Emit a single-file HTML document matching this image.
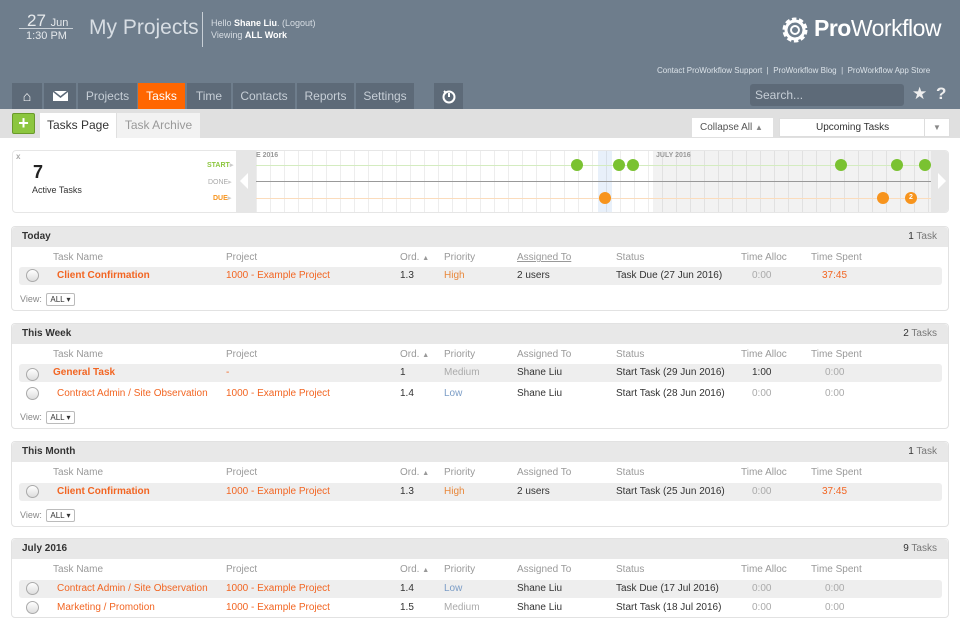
<!DOCTYPE html>
<html><head><meta charset="utf-8"><style>
*{box-sizing:border-box;margin:0;padding:0}
body{width:960px;height:607px;overflow:hidden;background:#fff;font-family:"Liberation Sans",sans-serif;font-size:10px;color:#333;position:relative}
.a{position:absolute}
#hdr{left:0;top:0;width:960px;height:109px;background:#6e7d8c}
.tab{position:absolute;top:83px;height:26px;background:#5d6a78;color:#c6ced6;font-size:12px;line-height:26px;text-align:center}
#strip{left:0;top:109px;width:960px;height:29px;background:#e0e0e0}
.sec{position:absolute;left:11px;width:938px;border:1px solid #e2e2e2;border-radius:4px;background:#fff}
.sh{height:20px;background:#e8e8e8;font-weight:bold;font-size:10px;line-height:20px;padding-left:10px;color:#333;border-radius:4px 4px 0 0}
.sh span{position:absolute;right:11px;font-weight:normal;color:#777}
.sh span b{color:#333;font-weight:normal}
.ch,.row{position:absolute;left:0;width:938px;height:18px;line-height:18px}
.ch div{position:absolute;color:#999}
.row{left:7px;width:923px;background:#eee;border-radius:3px}
.row div{position:absolute}
.rad{width:13px;height:13px;border:1px solid #aaa;border-radius:50%;top:2px;left:7px;background:linear-gradient(#fff,#ddd)}
.or{color:#f26522}
.view{position:absolute;left:8px;color:#888;font-size:9px}
.view span{display:inline-block;border:1px solid #bbb;border-radius:2px;padding:0 3px;color:#333;font-size:8px;line-height:11px;margin-left:2px}
.dot{position:absolute;width:12px;height:12px;border-radius:50%}
</style></head><body>
<div id="hdr" class="a"></div>
<div class="a" style="left:27px;top:11px;font-size:17px;color:#e6e9ec">27 <span style="font-size:11px">Jun</span></div>
<div class="a" style="left:19px;top:28px;width:54px;border-top:1px solid #c8cfd6"></div>
<div class="a" style="left:26px;top:30px;font-size:11px;color:#e6e9ec">1:30 PM</div>
<div class="a" style="left:89px;top:16px;font-size:21px;color:#d7dde3">My Projects</div>
<div class="a" style="left:202px;top:12px;height:35px;border-left:1px solid #c8cfd6"></div>
<div class="a" style="left:211px;top:17px;font-size:9px;color:#d7dde3;line-height:12px">Hello <b style="color:#fff">Shane Liu</b>. (Logout)<br>Viewing <b style="color:#fff">ALL Work</b></div>
<svg class="a" style="left:781px;top:15px" width="28" height="30" viewBox="0 0 28 30"><circle cx="14" cy="15" r="10" fill="none" stroke="#fff" stroke-width="5" stroke-dasharray="4 2.3"/><circle cx="14" cy="15" r="9" fill="none" stroke="#fff" stroke-width="3"/><circle cx="14" cy="15" r="4" fill="none" stroke="#fff" stroke-width="2"/></svg>
<div class="a" style="left:814px;top:15px;font-size:23px;color:#fff;letter-spacing:-0.5px"><b>Pro</b>Workflow</div>
<div class="a" style="left:657px;top:66px;font-size:8px;color:#dbe2e8;word-spacing:0">Contact ProWorkflow Support &nbsp;|&nbsp; ProWorkflow Blog &nbsp;|&nbsp; ProWorkflow App Store</div>
<div class="a" style="left:750px;top:84px;width:154px;height:22px;background:#5d6a78;border-radius:3px;color:#c6ced6;font-size:12px;line-height:22px;padding-left:5px">Search...</div>
<div class="a" style="left:912px;top:84px;color:#eee;font-size:17px">★</div>
<div class="a" style="left:936px;top:84px;color:#eee;font-size:17px;font-weight:bold">?</div>
<div class="tab" style="left:12px;width:30px;color:#fff;font-size:14px">⌂</div>
<div class="tab" style="left:44px;width:32px"><svg width="15" height="10" style="margin-top:8px"><rect width="15" height="10" fill="#fff"/><path d="M0 0 L7.5 6 L15 0" stroke="#5d6a78" fill="none" stroke-width="1.5"/></svg></div>
<div class="tab" style="left:78px;width:59px">Projects</div>
<div class="tab" style="left:138px;width:47px;background:#ff6600;color:#fff">Tasks</div>
<div class="tab" style="left:187px;width:44px">Time</div>
<div class="tab" style="left:233px;width:62px">Contacts</div>
<div class="tab" style="left:297px;width:57px">Reports</div>
<div class="tab" style="left:356px;width:58px">Settings</div>
<div class="tab" style="left:434px;width:29px"><svg width="16" height="16" style="margin-top:5px"><circle cx="8" cy="9" r="5.5" fill="none" stroke="#fff" stroke-width="2"/><path d="M8 9V5M3 3l2 2" stroke="#fff" stroke-width="2"/></svg></div>
<div id="strip" class="a"></div>
<div class="a" style="left:12px;top:113px;width:23px;height:21px;background:#8cc63f;border:1px solid #6a9a2a;border-radius:2px;color:#fff;font-size:18px;font-weight:bold;text-align:center;line-height:19px">+</div>
<div class="a" style="left:40px;top:113px;width:76px;height:25px;background:#fff;font-size:12px;line-height:25px;text-align:center;color:#333">Tasks Page</div>
<div class="a" style="left:117px;top:113px;width:83px;height:25px;background:#f2f2f2;font-size:12px;line-height:25px;text-align:center;color:#999">Task Archive</div>
<div class="a" style="left:692px;top:118px;width:81px;height:19px;background:#fff;font-size:10px;line-height:19px;padding-left:8px;color:#555">Collapse All <span style="color:#888;font-size:8px">▲</span></div>
<div class="a" style="left:779px;top:118px;width:171px;height:19px;background:#fff;border:1px solid #ddd;font-size:10px;line-height:18px;color:#333"><span style="position:absolute;left:36px">Upcoming Tasks</span><span style="position:absolute;right:0;width:25px;border-left:1px solid #ddd;text-align:center;color:#888;font-size:8px">▼</span></div>
<!-- timeline -->
<div class="a" style="left:12px;top:150px;width:937px;height:63px;border:1px solid #e6e6e6;border-radius:4px;background:#fff;overflow:hidden">
<div class="a" style="left:3px;top:1px;color:#aaa;font-size:8px;font-weight:bold">x</div>
<div class="a" style="left:20px;top:11px;font-size:18px;font-weight:bold;color:#222">7</div>
<div class="a" style="left:19px;top:34px;font-size:9px;color:#333">Active Tasks</div>
<div class="a" style="left:194px;top:10px;font-size:7px;color:#8cc63f;font-weight:bold">START<span style="color:#ccc">▸</span></div>
<div class="a" style="left:195px;top:27px;font-size:7px;color:#aaa">DONE<span style="color:#ccc">▸</span></div>
<div class="a" style="left:200px;top:43px;font-size:7px;color:#f7941d;font-weight:bold">DUE<span style="color:#ccc">▸</span></div>
<div class="a" style="left:223px;top:0;width:20px;height:63px;background:#e6e6e6"></div>
<div class="a" style="left:227px;top:22px;width:0;height:0;border-top:8px solid transparent;border-bottom:8px solid transparent;border-right:8px solid #fff"></div>
<div class="a" style="left:640px;top:0;width:278px;height:63px;background:#f2f2f2"></div>
<div class="a" style="left:585px;top:0;width:14px;height:63px;background:#e8f0fa"></div>
<div class="a" style="left:243px;top:0;width:675px;height:63px;background-image:linear-gradient(90deg,rgba(0,0,0,.07) 1px,transparent 1px);background-size:14px 63px"></div>
<div class="a" style="left:243px;top:1px;font-size:7px;color:#999;font-weight:bold">E 2016</div>
<div class="a" style="left:643px;top:1px;font-size:7px;color:#999;font-weight:bold">JULY 2016</div>
<div class="a" style="left:243px;top:14px;width:675px;border-top:1px solid #d4ecc0"></div>
<div class="a" style="left:243px;top:30px;width:675px;border-top:1px solid #999"></div>
<div class="a" style="left:243px;top:47px;width:675px;border-top:1px solid #fbdcbc"></div>
<div class="a" style="left:918px;top:0;width:19px;height:63px;background:#e6e6e6"></div>
<div class="a" style="left:925px;top:22px;width:0;height:0;border-top:8px solid transparent;border-bottom:8px solid transparent;border-left:8px solid #fff"></div>
<div class="dot" style="left:558px;top:8px;background:#7ac231"></div>
<div class="dot" style="left:600px;top:8px;background:#7ac231"></div>
<div class="dot" style="left:614px;top:8px;background:#7ac231"></div>
<div class="dot" style="left:822px;top:8px;background:#7ac231"></div>
<div class="dot" style="left:878px;top:8px;background:#7ac231"></div>
<div class="dot" style="left:906px;top:8px;background:#7ac231"></div>
<div class="dot" style="left:586px;top:41px;background:#f7941d"></div>
<div class="dot" style="left:864px;top:41px;background:#f7941d"></div>
<div class="dot" style="left:892px;top:41px;background:#f7941d;color:#fff;font-size:7px;font-weight:bold;text-align:center;line-height:12px">2</div>
</div>

<!-- Today -->
<div class="sec" style="top:226px;height:85px"><div class="sh">Today<span><b>1</b> Task</span></div>
<div class="ch" style="top:22px"><div style="left:41px">Task Name</div><div style="left:214px">Project</div><div style="left:388px">Ord. <span style="font-size:7px">▲</span></div><div style="left:432px">Priority</div><div style="left:505px;text-decoration:underline">Assigned To</div><div style="left:604px">Status</div><div style="left:729px">Time Alloc</div><div style="left:799px">Time Spent</div></div>
<div class="row" style="top:40px"><div class="rad"></div><div class="or" style="left:38px;font-weight:bold">Client Confirmation</div><div class="or" style="left:207px">1000 - Example Project</div><div style="left:381px">1.3</div><div style="left:425px;color:#e8873a">High</div><div style="left:498px">2 users</div><div style="left:597px">Task Due (27 Jun 2016)</div><div style="left:733px;color:#aaa">0:00</div><div class="or" style="left:803px">37:45</div></div>
<div class="view" style="top:66px">View: <span>ALL ▾</span></div></div>

<!-- This Week -->
<div class="sec" style="top:323px;height:106px"><div class="sh">This Week<span><b>2</b> Tasks</span></div>
<div class="ch" style="top:22px"><div style="left:41px">Task Name</div><div style="left:214px">Project</div><div style="left:388px">Ord. <span style="font-size:7px">▲</span></div><div style="left:432px">Priority</div><div style="left:505px">Assigned To</div><div style="left:604px">Status</div><div style="left:729px">Time Alloc</div><div style="left:799px">Time Spent</div></div>
<div class="row" style="top:40px"><div class="rad" style="display:none"></div><div class="or" style="left:34px;font-weight:bold">General Task</div><div class="or" style="left:207px">-</div><div style="left:381px">1</div><div style="left:425px;color:#aaa">Medium</div><div style="left:498px">Shane Liu</div><div style="left:597px">Start Task (29 Jun 2016)</div><div style="left:733px">1:00</div><div style="left:806px;color:#aaa">0:00</div></div>
<div class="row" style="top:61px;background:#fff"><div class="rad"></div><div class="or" style="left:38px">Contract Admin / Site Observation</div><div class="or" style="left:207px">1000 - Example Project</div><div style="left:381px">1.4</div><div style="left:425px;color:#7a9cc6">Low</div><div style="left:498px">Shane Liu</div><div style="left:597px">Start Task (28 Jun 2016)</div><div style="left:733px;color:#aaa">0:00</div><div style="left:806px;color:#aaa">0:00</div></div>
<div class="rad a" style="left:14px;top:44px"></div>
<div class="view" style="top:87px">View: <span>ALL ▾</span></div></div>

<!-- This Month -->
<div class="sec" style="top:441px;height:86px"><div class="sh">This Month<span><b>1</b> Task</span></div>
<div class="ch" style="top:22px"><div style="left:41px">Task Name</div><div style="left:214px">Project</div><div style="left:388px">Ord. <span style="font-size:7px">▲</span></div><div style="left:432px">Priority</div><div style="left:505px">Assigned To</div><div style="left:604px">Status</div><div style="left:729px">Time Alloc</div><div style="left:799px">Time Spent</div></div>
<div class="row" style="top:41px"><div class="rad"></div><div class="or" style="left:38px;font-weight:bold">Client Confirmation</div><div class="or" style="left:207px">1000 - Example Project</div><div style="left:381px">1.3</div><div style="left:425px;color:#e8873a">High</div><div style="left:498px">2 users</div><div style="left:597px">Start Task (25 Jun 2016)</div><div style="left:733px;color:#aaa">0:00</div><div class="or" style="left:803px">37:45</div></div>
<div class="view" style="top:67px">View: <span>ALL ▾</span></div></div>

<!-- July -->
<div class="sec" style="top:538px;height:80px"><div class="sh">July 2016<span><b>9</b> Tasks</span></div>
<div class="ch" style="top:22px"><div style="left:41px">Task Name</div><div style="left:214px">Project</div><div style="left:388px">Ord. <span style="font-size:7px">▲</span></div><div style="left:432px">Priority</div><div style="left:505px">Assigned To</div><div style="left:604px">Status</div><div style="left:729px">Time Alloc</div><div style="left:799px">Time Spent</div></div>
<div class="row" style="top:41px"><div class="rad"></div><div class="or" style="left:38px">Contract Admin / Site Observation</div><div class="or" style="left:207px">1000 - Example Project</div><div style="left:381px">1.4</div><div style="left:425px;color:#7a9cc6">Low</div><div style="left:498px">Shane Liu</div><div style="left:597px">Task Due (17 Jul 2016)</div><div style="left:733px;color:#aaa">0:00</div><div style="left:806px;color:#aaa">0:00</div></div>
<div class="row" style="top:60px;background:#fff"><div class="rad"></div><div class="or" style="left:38px">Marketing / Promotion</div><div class="or" style="left:207px">1000 - Example Project</div><div style="left:381px">1.5</div><div style="left:425px;color:#aaa">Medium</div><div style="left:498px">Shane Liu</div><div style="left:597px">Start Task (18 Jul 2016)</div><div style="left:733px;color:#aaa">0:00</div><div style="left:806px;color:#aaa">0:00</div></div>
</div>
</body></html>
